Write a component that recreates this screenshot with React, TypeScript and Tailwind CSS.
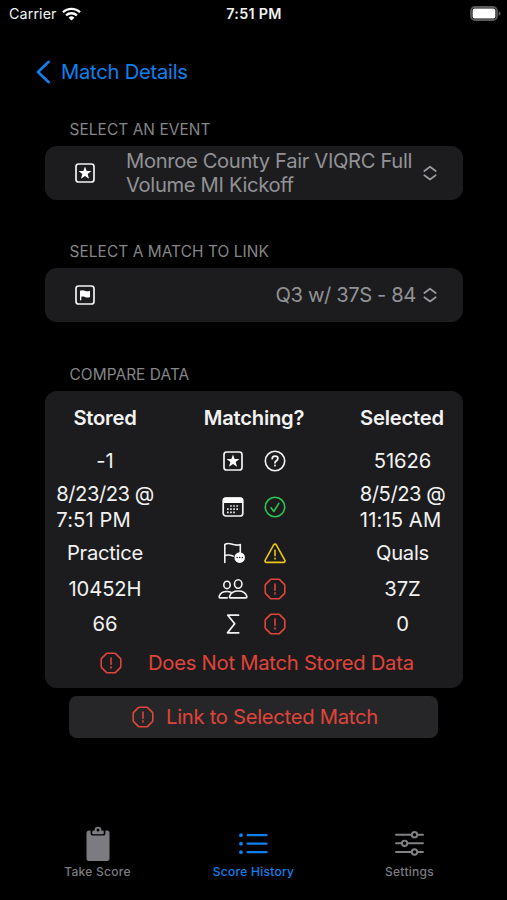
import type { ReactNode } from 'react'

function Wifi() {
  return (
    <svg width="19" height="14" viewBox="0 0 19 14" fill="none" stroke="#fff" strokeWidth="2.3">
      <path d="M1 5.3a12.2 12.2 0 0 1 17 0" />
      <path d="M4.1 8.4a7.8 7.8 0 0 1 10.8 0" />
      <path d="M9.5 13.6 6.6 10.7a4.2 4.2 0 0 1 5.8 0z" fill="#fff" stroke="none" />
    </svg>
  )
}

function Battery() {
  return (
    <svg width="31" height="15" viewBox="0 0 31 15" fill="none">
      <rect x="1" y="1" width="26" height="13" rx="4" stroke="#59595b" strokeWidth="1.8" />
      <rect x="2.6" y="2.6" width="22.8" height="9.8" rx="2" fill="#fff" />
      <path d="M28.6 5.3c1.6.5 2 1.3 2 2.2s-.4 1.7-2 2.2z" fill="#59595b" />
    </svg>
  )
}

function StarSquare() {
  return (
    <svg width="20" height="20" viewBox="0 0 20 20" fill="none">
      <rect x="1" y="1" width="18" height="18" rx="2.6" stroke="#f2f2f2" strokeWidth="1.7" />
      <path d="m10 3.4 1.65 4.6 4.8.1-3.8 2.95 1.4 4.65L10 12.95l-4.05 2.75 1.4-4.65-3.8-2.95 4.8-.1z" fill="#fff" />
    </svg>
  )
}

function FlagSquare() {
  return (
    <svg width="20" height="20" viewBox="0 0 20 20" fill="none">
      <rect x="1" y="1" width="18" height="18" rx="2.6" stroke="#f2f2f2" strokeWidth="1.7" />
      <path d="M5 5.7c1.5-.8 3-.7 4.8 0 1.9.7 3.4.7 5.2 0v6.3c-1.8.7-3.3.7-5.2 0-1.300-.5-2.400-.6-3.500-.3v3.600H5z" fill="#fff" />
    </svg>
  )
}

function Chevrons() {
  return (
    <svg width="14" height="16" viewBox="0 0 14 16" fill="none" stroke="#98989d" strokeWidth="1.7" strokeLinecap="round" strokeLinejoin="round">
      <path d="M1.3 6 7 1.7 12.7 6M1.3 10.2 7 14.500l5.700-4.300" />
    </svg>
  )
}

function Question() {
  return (
    <svg width="22" height="22" viewBox="0 0 22 22" fill="none" stroke="#f2f2f2" strokeLinecap="round">
      <circle cx="11" cy="11" r="9.7" strokeWidth="1.6" />
      <path d="M8.2 8.7C8.3 7.1 9.4 6.2 11 6.2c1.7 0 2.9.9 2.9 2.3 0 1.2-.7 1.8-1.6 2.400-.9.5-1.300 1-1.300 1.900" strokeWidth="1.8" />
      <circle cx="11" cy="15.5" r="0.4" strokeWidth="1.4" />
    </svg>
  )
}

function Calendar() {
  return (
    <svg width="22" height="20" viewBox="0 0 22 20" fill="none">
      <rect x="1.2" y="1" width="19.6" height="18" rx="2.8" stroke="#f2f2f2" strokeWidth="1.7" />
      <path d="M1 3.5A2.8 2.8 0 0 1 3.8 0.6h14.400A2.800 2.800 0 0 1 21 3.500v2.600H1z" fill="#fff" />
      <g stroke="#e5e5e5" strokeWidth="1.7" strokeDasharray="1.7 1.4">
        <path d="M8.1 9h9.4M5 12.2h12.5M5 15.4h9.3" />
      </g>
    </svg>
  )
}

function CheckCircle() {
  return (
    <svg width="22" height="22" viewBox="0 0 22 22" fill="none" stroke="#2fc553" strokeWidth="1.6" strokeLinecap="round" strokeLinejoin="round">
      <circle cx="11" cy="11" r="9.7" />
      <path d="m7 11.8 2.9 3.6 4.9-8" />
    </svg>
  )
}

function FlagDots() {
  return (
    <svg width="24" height="22" viewBox="0 0 24 22" fill="none">
      <path d="M3.800 20.500V2.500c1.500-1 4.300-1.300 7.500-.2s5 1.200 8 .2v8M3.800 13.700c2.700-1.300 5-.8 8.200.4" stroke="#f2f2f2" strokeWidth="1.6" strokeLinecap="round" strokeLinejoin="round" />
      <circle cx="18.7" cy="15.6" r="5.3" fill="#fff" />
      <g fill="#1c1c1e">
        <circle cx="16.1" cy="15.6" r="0.75" />
        <circle cx="18.7" cy="15.6" r="0.75" />
        <circle cx="21.3" cy="15.6" r="0.75" />
      </g>
    </svg>
  )
}

function Warning() {
  return (
    <svg width="22" height="21" viewBox="0 0 22 21" fill="none" stroke="#ecc814" strokeWidth="1.6" strokeLinecap="round" strokeLinejoin="round">
      <path d="M9.7 1.9a1.5 1.5 0 0 1 2.600 0l8.500 15.200a1.500 1.500 0 0 1-1.300 2.300h-17a1.500 1.500 0 0 1-1.300-2.300z" />
      <path d="M11 7.2v5.4" />
      <circle cx="11" cy="15.7" r="0.3" />
    </svg>
  )
}

function Octagon() {
  return (
    <svg width="22" height="22" viewBox="0 0 22 22" fill="none" stroke="#e0443b" strokeWidth="1.6" strokeLinecap="round" strokeLinejoin="round">
      <path d="M7.4 1.2h7.2a1.4 1.4 0 0 1 1 .4l4.8 4.8a1.4 1.4 0 0 1 .4 1v7.2a1.4 1.4 0 0 1-.4 1l-4.800 4.800a1.400 1.400 0 0 1-1 .4H7.400a1.400 1.400 0 0 1-1-.4l-4.800-4.800a1.400 1.400 0 0 1-.4-1V7.400a1.400 1.400 0 0 1 .4-1l4.800-4.800a1.400 1.400 0 0 1 1-.4z" />
      <path d="M11 6v6.3" />
      <circle cx="11" cy="15.5" r="0.35" />
    </svg>
  )
}

function People() {
  return (
    <svg width="30" height="20" viewBox="0 0 30 20" fill="none" stroke="#f2f2f2" strokeWidth="1.6" strokeLinecap="round" strokeLinejoin="round">
      <ellipse cx="9" cy="5.9" rx="3.2" ry="3.7" />
      <ellipse cx="20.2" cy="5" rx="3.7" ry="4.2" />
      <path d="M12.500 18.900h15c1.200 0 1.600-.6 1.300-1.600-.9-3-4.200-5.300-8.500-5.300-4.400 0-7.800 2.300-8.700 5.300-.3 1 .1 1.600.9 1.600z" />
      <path d="M9.200 18.900H2.400c-1.100 0-1.500-.7-1.200-1.600.8-2.600 3.900-4.800 7.800-4.800 1.500 0 2.800.3 3.900.8" />
    </svg>
  )
}

function Sigma() {
  return (
    <svg width="14" height="20" viewBox="0 0 14 20" fill="none" stroke="#f2f2f2" strokeWidth="1.8" strokeLinecap="round" strokeLinejoin="round">
      <path d="M12.5 1.2H1.8l6.9 8.6-7.2 9h11.2" />
    </svg>
  )
}

function Clipboard() {
  return (
    <svg width="24" height="36" viewBox="0 0 24 36" fill="none">
      <rect x="0.5" y="4.6" width="23" height="30.4" rx="2.8" fill="#7c7c80" />
      {/* gap between board and clip */}
      <rect x="4.6" y="3" width="14.8" height="6.600" rx="2.200" fill="#000" />
      <rect x="6.2" y="4.6" width="11.6" height="3.600" rx="1.300" fill="#7c7c80" />
      <circle cx="12" cy="4.1" r="3.4" fill="#7c7c80" />
      <circle cx="12" cy="4" r="1.500" fill="#000" />
    </svg>
  )
}

function List() {
  return (
    <svg width="29" height="22" viewBox="0 0 29 22" stroke="#0f80ee" strokeWidth="2.2" strokeLinecap="round">
      <path d="M8.6 2.2h19M8.6 10.7h19M8.6 19.2h19" />
      <g fill="#0f80ee" stroke="none">
        <circle cx="2" cy="2.2" r="1.9" />
        <circle cx="2" cy="10.7" r="1.9" />
        <circle cx="2" cy="19.2" r="1.9" />
      </g>
    </svg>
  )
}

function Sliders() {
  return (
    <svg width="29" height="25" viewBox="0 0 29 25" fill="none" stroke="#828286" strokeWidth="1.9" strokeLinecap="round">
      <path d="M1 3.7h15.500M22.500 3.700H28M1 12.300h5.800M12.600 12.300H28M1 21h15.500M22.500 21H28" />
      <circle cx="19.5" cy="3.7" r="2.7" />
      <circle cx="9.6" cy="12.3" r="2.7" />
      <circle cx="19.5" cy="21" r="2.7" />
    </svg>
  )
}

interface RowProps {
  stored: ReactNode
  icon: ReactNode
  status: ReactNode
  selected: ReactNode
  height: string
}

function CompareRow({ stored, icon, status, selected, height }: RowProps) {
  return (
    <div className={`grid grid-cols-[120px_178px_120px] items-center ${height}`}>
      <div className="flex justify-center pt-px">{stored}</div>
      <div className="flex items-center pl-[47px]">
        <div className="flex w-[42px] justify-center">{icon}</div>
        <div className="flex w-[42px] justify-center">{status}</div>
      </div>
      <div className="flex justify-center pt-px pr-px">{selected}</div>
    </div>
  )
}

function DateCell({ date, time }: { date: string; time: string }) {
  return (
    <p>
      <span className="block tracking-[-0.5px]">{date} @</span>
      <span className="block tracking-[0.1px]">{time}</span>
    </p>
  )
}

function SectionLabel({ children, className }: { children: ReactNode; className: string }) {
  return <h2 className={`pl-[69.5px] text-[15.4px] leading-[20px] tracking-[0.08px] text-[#858588] ${className}`}>{children}</h2>
}

const TABS = [
  { label: 'Take Score', icon: <Clipboard />, color: 'text-[#7c7c80]' },
  { label: 'Score History', icon: <List />, color: 'text-[#0f80ee]' },
  { label: 'Settings', icon: <Sliders />, color: 'text-[#7c7c80]' },
]

export default function App() {
  return (
    <div className="flex h-[900px] w-[507px] flex-col overflow-hidden bg-black font-['Inter',sans-serif] text-[20.2px] text-[#f2f2f2]">
      {/* Status bar */}
      <div className="grid h-[27px] grid-cols-3 items-center pr-[6px] pl-[9px] text-[14.3px] leading-[20px]">
        <div className="flex items-center gap-[5px]">
          <span className="tracking-[0.1px]">Carrier</span>
          <Wifi />
        </div>
        <span className="pt-px pr-[2px] text-center font-semibold tracking-[0.3px]">7:51 PM</span>
        <div className="flex justify-end"><Battery /></div>
      </div>

      {/* Nav */}
      <button className="mt-[31px] flex h-[28px] items-center gap-[10px] pl-[36px] text-[#0f80ee]">
        <svg width="15" height="24" viewBox="0 0 15 24" fill="none" stroke="currentColor" strokeWidth="2.6" strokeLinecap="round" strokeLinejoin="round">
          <path d="M12.7 1.8 2 12l10.7 10.2" />
        </svg>
        <span className="pt-px tracking-[-0.25px]">Match Details</span>
      </button>

      <SectionLabel className="mt-[34px]">SELECT AN EVENT</SectionLabel>
      <div className="mx-[45px] mt-[6px] flex h-[54px] w-[418px] items-center rounded-xl bg-[#1c1c1e] pr-[26px] pl-[30px]">
        <StarSquare />
        <p className="ml-[31px] flex-1 leading-[24.5px] tracking-[-0.34px] whitespace-nowrap text-[#929296]">
          Monroe County Fair VIQRC Full<br />Volume MI Kickoff
        </p>
        <Chevrons />
      </div>

      <SectionLabel className="mt-[42px]">SELECT A MATCH TO LINK</SectionLabel>
      <div className="mx-[45px] mt-[6px] flex h-[54px] w-[418px] items-center rounded-xl bg-[#1c1c1e] pr-[26px] pl-[30px]">
        <FlagSquare />
        <span className="mr-[7px] ml-auto pt-px tracking-[-0.4px] text-[#929296]">Q3 w/ 37S - 84</span>
        <Chevrons />
      </div>

      <SectionLabel className="mt-[43px]">COMPARE DATA</SectionLabel>
      <div className="mx-[45px] mt-[6px] h-[297px] w-[418px] rounded-xl bg-[#1c1c1e]">
        <div className="grid h-[52px] grid-cols-[120px_178px_120px] items-center pt-[2px] text-center font-semibold tracking-[-0.22px]">
          <span>Stored</span>
          <span>Matching?</span>
          <span className="pr-[2px]">Selected</span>
        </div>
        <CompareRow height="h-[35px] tracking-[-0.1px]" stored="-1" icon={<StarSquare />} status={<Question />} selected="51626" />
        <CompareRow
          height="h-[57px] leading-[26.5px]"
          stored={<DateCell date="8/23/23" time="7:51 PM" />}
          icon={<Calendar />}
          status={<CheckCircle />}
          selected={<DateCell date="8/5/23" time="11:15 AM" />}
        />
        <CompareRow height="h-[36px] tracking-[-0.25px]" stored="Practice" icon={<FlagDots />} status={<Warning />} selected="Quals" />
        <CompareRow height="h-[35px] tracking-[-0.1px]" stored="10452H" icon={<People />} status={<Octagon />} selected="37Z" />
        <CompareRow height="h-[36px] tracking-[-0.1px]" stored="66" icon={<Sigma />} status={<Octagon />} selected="0" />
        <div className="flex h-[42px] items-center pl-[55px] text-[#e0443b]">
          <Octagon />
          <span className="ml-[26px] pt-px tracking-[-0.24px]">Does Not Match Stored Data</span>
        </div>
      </div>

      <button className="mt-[8px] ml-[69px] flex h-[42px] w-[369px] items-center rounded-lg bg-[#262628] pl-[63px] text-[#e0443b]">
        <Octagon />
        <span className="ml-[12px] pt-px tracking-[-0.27px]">Link to Selected Match</span>
      </button>

      {/* Tab bar */}
      <nav className="mt-auto grid h-[75px] grid-cols-3 px-[19.5px] text-[12px] font-medium">
        {TABS.map((tab) => (
          <div key={tab.label} className={`flex flex-col items-center ${tab.color}`}>
            <div className="flex h-[37px] items-center">{tab.icon}</div>
            <span className="mt-[2px] leading-[16px] tracking-[0.27px]">{tab.label}</span>
          </div>
        ))}
      </nav>
    </div>
  )
}
